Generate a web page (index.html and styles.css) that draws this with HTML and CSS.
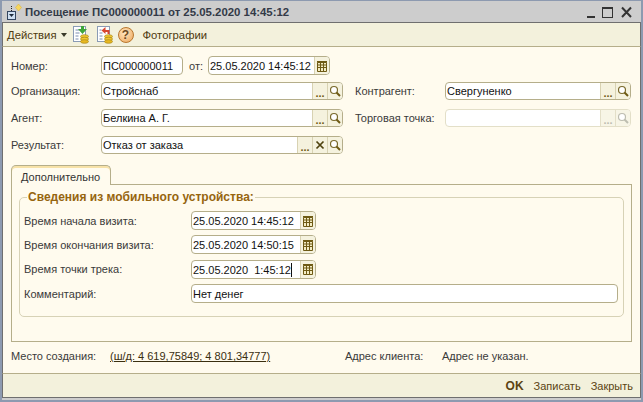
FILE: index.html
```html
<!DOCTYPE html>
<html lang="ru">
<head>
<meta charset="utf-8">
<title>Посещение</title>
<link rel="stylesheet" href="styles.css">
</head>
<body>
<div class="window">
  <header class="titlebar">
    <svg class="title-icon" width="18" height="18" viewBox="0 0 18 18"><path d="M13.500 1l3 3.500-3 3.500-3-3.500z" fill="#f7d65c" stroke="#d9b545" stroke-width=".6"/><rect x="2.500" y="8.500" width="8" height="8" fill="#cfe0f2" stroke="#33465f"/><path d="M6.500 3v6" stroke="#222" stroke-dasharray="1 1"/><path d="M4 11h5l-2.500 3z" fill="#1d2a3a"/></svg>
    <span class="title-text">Посещение ПС000000011 от 25.05.2020 14:45:12</span>
    <div class="win-buttons">
      <svg width="10" height="14" viewBox="0 0 10 14"><rect x="1" y="11" width="8" height="2" fill="#333"/></svg>
      <svg width="13" height="14" viewBox="0 0 13 14"><rect x=".5" y="2.500" width="10" height="10" fill="none" stroke="#333"/><rect x="0" y="2" width="11" height="2" fill="#333"/></svg>
      <svg width="12" height="14" viewBox="0 0 12 14"><path d="M1 2.500l9 9.500M10 2.500l-9 9.500" stroke="#333" stroke-width="2"/></svg>
    </div>
  </header>

  <nav class="toolbar">
    <span class="menu-item">Действия</span><span class="caret"></span>
    <svg class="tool-icon" width="18" height="18" viewBox="0 0 18 18"><rect x="1.500" y=".5" width="12" height="15" fill="#fff" stroke="#8a9bb5"/><path d="M3.500 4h4M3.500 7h4M3.500 10h3M3.500 13h3" stroke="#7a8cb0"/><path d="M9 0h3v3h3l-4.500 5L6 3h3z" fill="#3fa53a"/><ellipse cx="12.500" cy="10.500" rx="4" ry="1.800" fill="#f0c62e" stroke="#a8861a" stroke-width=".7"/><ellipse cx="12.500" cy="13" rx="4" ry="1.800" fill="#f0c62e" stroke="#a8861a" stroke-width=".7"/><ellipse cx="12.500" cy="15.500" rx="4" ry="1.800" fill="#e8b820" stroke="#a8861a" stroke-width=".7"/></svg>
    <svg class="tool-icon tool-icon-last" width="18" height="18" viewBox="0 0 18 18"><rect x="1.500" y=".5" width="12" height="15" fill="#fff" stroke="#8a9bb5"/><path d="M3.500 4h2M3.500 7h3M3.500 10h3M3.500 13h3" stroke="#7a8cb0"/><path d="M13.500 8V4h-4V1L5.500 4.500 9.500 8V6h2v2z" fill="#d8452e"/><ellipse cx="12.500" cy="10.500" rx="4" ry="1.800" fill="#f0c62e" stroke="#a8861a" stroke-width=".7"/><ellipse cx="12.500" cy="13" rx="4" ry="1.800" fill="#f0c62e" stroke="#a8861a" stroke-width=".7"/><ellipse cx="12.500" cy="15.500" rx="4" ry="1.800" fill="#e8b820" stroke="#a8861a" stroke-width=".7"/></svg>
    <span class="help-icon">?</span>
    <span class="menu-item">Фотографии</span>
  </nav>

  <main class="form">
    <section class="head-grid">
      <label class="lbl lbl-first">Номер:</label>
      <div class="number-row">
        <span class="field field-number"><span class="field-value">ПС000000011</span></span>
        <span class="lbl lbl-ot">от:</span>
        <span class="field field-date-head"><span class="field-value">25.05.2020 14:45:12</span><span class="fbtn"><svg class="i-cal" viewBox="0 0 10 12"><path d="M.5 2.500h9v9h-9zM.5 5h9M.5 7.500h9M3.500 2.500v9M6.500 2.500v9" fill="#f3ecc4" stroke="#6e5a14"/><rect x="0" y="1" width="10" height="1.500" fill="#6e5a14"/></svg></span></span>
      </div>
      <span></span><span></span><span></span>

      <label class="lbl">Организация:</label>
      <span class="field"><span class="field-value">Стройснаб</span><span class="fbtn dots">...</span><span class="fbtn"><svg class="i-search" viewBox="0 0 12 12"><circle cx="5" cy="5" r="3.500" fill="#fff" stroke="#7a6a2c" stroke-width="1.200"/><path d="M7.500 7.500l3.500 3.500" stroke="#6e5a14" stroke-width="2"/></svg></span></span>
      <span></span>
      <label class="lbl">Контрагент:</label>
      <span class="field"><span class="field-value">Свергуненко</span><span class="fbtn dots">...</span><span class="fbtn"><svg class="i-search" viewBox="0 0 12 12"><circle cx="5" cy="5" r="3.500" fill="#fff" stroke="#7a6a2c" stroke-width="1.200"/><path d="M7.500 7.500l3.500 3.500" stroke="#6e5a14" stroke-width="2"/></svg></span></span>

      <label class="lbl">Агент:</label>
      <span class="field"><span class="field-value">Белкина А. Г.</span><span class="fbtn dots">...</span><span class="fbtn"><svg class="i-search" viewBox="0 0 12 12"><circle cx="5" cy="5" r="3.500" fill="#fff" stroke="#7a6a2c" stroke-width="1.200"/><path d="M7.500 7.500l3.500 3.500" stroke="#6e5a14" stroke-width="2"/></svg></span></span>
      <span></span>
      <label class="lbl">Торговая точка:</label>
      <span class="field field-off"><span class="field-value"></span><span class="fbtn dots">...</span><span class="fbtn"><svg class="i-search" viewBox="0 0 12 12"><circle cx="5" cy="5" r="3.500" fill="#fff" stroke="#bdbdb0" stroke-width="1.200"/><path d="M7.500 7.500l3.500 3.500" stroke="#bdbdb0" stroke-width="2"/></svg></span></span>

      <label class="lbl">Результат:</label>
      <span class="field"><span class="field-value">Отказ от заказа</span><span class="fbtn dots">...</span><span class="fbtn"><svg class="i-x" viewBox="0 0 10 10"><path d="M1.500 1.500l7 7M8.500 1.500l-7 7" stroke="#4f430f" stroke-width="1.700"/></svg></span><span class="fbtn"><svg class="i-search" viewBox="0 0 12 12"><circle cx="5" cy="5" r="3.500" fill="#fff" stroke="#7a6a2c" stroke-width="1.200"/><path d="M7.500 7.500l3.500 3.500" stroke="#6e5a14" stroke-width="2"/></svg></span></span>
    </section>

    <div class="tabs"><span class="tab">Дополнительно</span><span class="tab-rest"></span></div>
    <section class="panel">
      <fieldset class="group">
        <legend class="group-title">Сведения из мобильного устройства:</legend>
        <div class="group-grid">
          <label class="lbl">Время начала визита:</label>
          <span class="field field-date"><span class="field-value">25.05.2020 14:45:12</span><span class="fbtn"><svg class="i-cal" viewBox="0 0 10 12"><path d="M.5 2.500h9v9h-9zM.5 5h9M.5 7.500h9M3.500 2.500v9M6.500 2.500v9" fill="#f3ecc4" stroke="#6e5a14"/><rect x="0" y="1" width="10" height="1.500" fill="#6e5a14"/></svg></span></span>
          <label class="lbl">Время окончания визита:</label>
          <span class="field field-date"><span class="field-value">25.05.2020 14:50:15</span><span class="fbtn"><svg class="i-cal" viewBox="0 0 10 12"><path d="M.5 2.500h9v9h-9zM.5 5h9M.5 7.500h9M3.500 2.500v9M6.500 2.500v9" fill="#f3ecc4" stroke="#6e5a14"/><rect x="0" y="1" width="10" height="1.500" fill="#6e5a14"/></svg></span></span>
          <label class="lbl">Время точки трека:</label>
          <span class="field field-date"><span class="field-value">25.05.2020  1:45:12<span class="cursor"></span></span><span class="fbtn"><svg class="i-cal" viewBox="0 0 10 12"><path d="M.5 2.500h9v9h-9zM.5 5h9M.5 7.500h9M3.500 2.500v9M6.500 2.500v9" fill="#f3ecc4" stroke="#6e5a14"/><rect x="0" y="1" width="10" height="1.500" fill="#6e5a14"/></svg></span></span>
          <label class="lbl">Комментарий:</label>
          <span class="field field-wide"><span class="field-value">Нет денег</span></span>
        </div>
      </fieldset>
    </section>

    <section class="info-row">
      <span class="lbl lbl-place">Место создания:</span>
      <a class="coords">(ш/д: 4 619,75849; 4 801,34777)</a>
      <span class="lbl lbl-addr">Адрес клиента:</span>
      <span class="lbl">Адрес не указан.</span>
    </section>
  </main>

  <footer class="actions">
    <span class="act-ok">OK</span>
    <span class="act">Записать</span>
    <span class="act">Закрыть</span>
  </footer>
</div>
</body>
</html>
```
FILE: styles.css
```css
* { box-sizing: border-box; }
html, body { margin: 0; height: 100%; }
body { font: 11px/14px "Liberation Sans", Arial, sans-serif; color: #3a3a2a; overflow: hidden; }

.window {
  width: 643px; height: 402px; display: flex; flex-direction: column;
  background: #cdcdcd; border: 2px solid #8d9ab0; border-top-width: 1px; padding: 0 0 2px;
}
.titlebar { height: 21px; display: flex; align-items: center; padding: 1px 8px 0 3px; flex: none; }
.title-icon { flex: none; margin-right: 2px; }
.title-text { font: bold 11.400px/16px "Liberation Sans", sans-serif; color: #333a48; }
.win-buttons { margin-left: auto; display: flex; gap: 6px; align-items: center; }

.toolbar {
  height: 25px; flex: none; display: flex; align-items: center; padding: 0 4px;
  background: #f3f1dc; border: 1px solid #6f6f6f; border-bottom-color: #b5ae8a;
}
.menu-item { color: #4f3a10; font-size: 11.300px; }
.caret { width: 0; height: 0; border: 3px solid transparent; border-top: 4px solid #3a3a2a; border-bottom: 0; margin: 0 5px 0 4px; }
.tool-icon { flex: none; margin-right: 6px; }
.tool-icon-last { margin-right: 4px; }
.help-icon {
  width: 16px; height: 16px; border-radius: 50%; flex: none; margin: 0 9px 0 0;
  background: radial-gradient(circle at 40% 35%, #ffe6c0, #eda65a); border: 1px solid #b9772e;
  color: #6b4a1f; font: bold 12px/14px "Liberation Sans", sans-serif; text-align: center;
}

.form { flex: 1; min-height: 0; background: #fffbee; border-left: 1px solid #6f6f6f; border-right: 1px solid #6f6f6f; padding: 9px 8px 0; display: flex; flex-direction: column; }

.head-grid { display: grid; grid-template-columns: 90px 242px 12px 90px 186px; grid-template-rows: 26px 27px 27px 18px; align-items: start; flex: none; }
.head-grid > .lbl { padding-top: 2px; }
.head-grid > .lbl-first { padding-top: 3px; }
.head-grid .field { height: 18px; }
.head-grid .number-row .field { height: 19px; }
.number-row { display: flex; align-items: center; grid-column: 2 / 3; }
.number-row .field-value { padding-top: 2px; }
.lbl { color: #3a3a3a; white-space: nowrap; }
.lbl-ot { margin: 0 5px 0 6px; }

.field { display: flex; height: 19px; background: #fff; border: 1px solid #b5ae8a; border-radius: 4px; overflow: hidden; }
.field-value { flex: 1; min-width: 0; padding: 1px 0 0 1px; color: #111; white-space: pre; }
.group-grid .field-value { padding-top: 2px; }
.field-number { width: 82px; flex: none; }
.field-date-head { width: 122px; flex: none; }
.field-date { width: 125px; flex: none; }
.fbtn { width: 15px; flex: none; display: flex; align-items: center; justify-content: center; background: #f5f2de; border-left: 1px solid #d8d2b2; }
.dots { font-weight: bold; color: #6e5a14; padding-top: 3px; }
.i-cal { width: 10px; height: 12px; }
.i-search { width: 12px; height: 12px; }
.i-x { width: 10px; height: 10px; }
.field-off { border-color: #e3dfc8; }
.field-off .fbtn { background: #f7f5e6; border-left-color: #e3dfc8; }
.field-off .dots { color: #bdbdb0; }
.cursor { display: inline-block; width: 1px; height: 14px; background: #111; vertical-align: -3px; }

.tabs { display: flex; align-items: flex-end; height: 20px; margin-top: 11px; flex: none; }
.tab { height: 20px; width: 100px; padding: 4px 0 0 9px; color: #333; border: 1px solid #b5ae8a; border-bottom: 0; border-radius: 5px 5px 0 0; box-shadow: inset 0 2px 0 #f7e2a8; background: #fffbee; }
.tab-rest { flex: 1; border-bottom: 1px solid #b5ae8a; }
.panel { height: 157px; flex: none; border: 1px solid #b5ae8a; border-top: 0; padding: 5px 7px 0 7px; }
.group { margin: 0; height: 127px; border: 1px solid #d7d2b6; border-radius: 5px; padding: 7px 4px 0 4px; min-width: 0; }
.group-title { color: #96650f; font: bold 12px/14px "Liberation Sans", sans-serif; padding: 0 1px; margin-left: 3px; }
.group-grid { display: grid; grid-template-columns: 167px 1fr; grid-auto-rows: 19px; row-gap: 5.400px; align-items: center; }
.field-wide { width: 427px; }

.info-row { display: flex; height: 14px; margin-top: 7px; align-items: center; flex: none; }
.lbl-place { width: 99px; }
.coords { color: #3a2f10; text-decoration: underline; width: 235px; white-space: nowrap; }
.lbl-addr { width: 97px; }

.actions { height: 25px; flex: none; display: flex; justify-content: flex-end; align-items: center; gap: 10px; padding: 1px 7px 0; background: #f3f1dc; border: 1px solid #6f6f6f; border-top-color: #b5ae8a; }
.act-ok { font: bold 12px/14px "Liberation Sans", sans-serif; color: #5b4413; }
.act { color: #5b4413; }
```
